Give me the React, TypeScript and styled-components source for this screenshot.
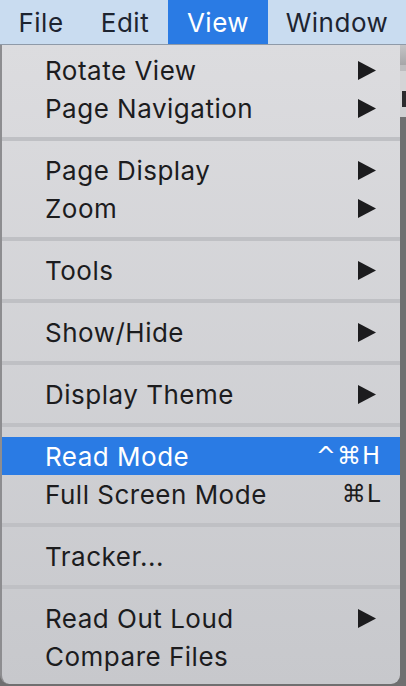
import React from "react";
import styled, { createGlobalStyle } from "styled-components";

const Global = createGlobalStyle`
  html, body { margin: 0; padding: 0; }
  body {
    width: 406px;
    height: 686px;
    overflow: hidden;
    background: #6f6f70;
    font-family: Inter, "Liberation Sans", "DejaVu Sans", sans-serif;
    -webkit-font-smoothing: antialiased;
  }
`;

const Screen = styled.div`
  width: 406px;
  height: 686px;
  display: flex;
  flex-direction: column;
`;

const MenuBar = styled.div`
  height: 44px;
  flex: none;
  display: flex;
  align-items: stretch;
  background: #c9dcf0;
  border-bottom: 1px solid #8f9aa8;
  box-sizing: content-box;
`;

const BarItem = styled.div<{ $active?: boolean; $w: number }>`
  width: ${(p) => p.$w}px;
  display: flex;
  align-items: center;
  justify-content: center;
  font-size: 26px;
  letter-spacing: 0.5px;
  color: ${(p) => (p.$active ? "#ffffff" : "#1d2430")};
  background: ${(p) => (p.$active ? "#2a7be4" : "transparent")};
`;

const Body = styled.div`
  flex: 1;
  display: flex;
  align-items: flex-start;
`;

const Menu = styled.div`
  width: 398px;
  flex: none;
  border-left: 2px solid #8d8d90;
  border-bottom-left-radius: 9px;
  border-bottom-right-radius: 9px;
  background: linear-gradient(#dcdcdf, #c7c8cc);
  padding: 6px 0 9px;
  display: flex;
  flex-direction: column;
`;

const Row = styled.div<{ $hl?: boolean }>`
  height: 38px;
  display: flex;
  align-items: center;
  padding: 0 24px 0 43px;
  font-size: 26px;
  letter-spacing: 0.5px;
  color: ${(p) => (p.$hl ? "#ffffff" : "#1c1c1e")};
  background: ${(p) => (p.$hl ? "#2a7be4" : "transparent")};
`;

const Label = styled.span`
  flex: 1;
`;

const Shortcut = styled.span`
  font-family: "DejaVu Sans", Inter, sans-serif;
  font-size: 24px;
  letter-spacing: 1px;
  margin-right: -5px;
`;

const Sep = styled.div`
  height: 24px;
  display: flex;
  align-items: center;
  &::after {
    content: "";
    flex: 1;
    height: 4px;
    background: #bfc0c4;
  }
`;

const Strip = styled.div`
  width: 6px;
  flex: none;
  display: flex;
  flex-direction: column;
`;

const StripBlock = styled.div<{ $h: number; $bg: string }>`
  height: ${(p) => p.$h}px;
  background: ${(p) => p.$bg};
  flex: none;
`;

const Arrow = () => (
  <svg width="18" height="19" viewBox="0 0 18 19">
    <path d="M0 0 L18 9.5 L0 19 Z" fill="#1c1c1e" />
  </svg>
);

type Item =
  | { sep: true }
  | { label: string; sub?: boolean; key?: string; hl?: boolean };

const items: Item[] = [
  { label: "Rotate View", sub: true },
  { label: "Page Navigation", sub: true },
  { sep: true },
  { label: "Page Display", sub: true },
  { label: "Zoom", sub: true },
  { sep: true },
  { label: "Tools", sub: true },
  { sep: true },
  { label: "Show/Hide", sub: true },
  { sep: true },
  { label: "Display Theme", sub: true },
  { sep: true },
  { label: "Read Mode", key: "^⌘H", hl: true },
  { label: "Full Screen Mode", key: "⌘L" },
  { sep: true },
  { label: "Tracker..." },
  { sep: true },
  { label: "Read Out Loud", sub: true },
  { label: "Compare Files" },
];

export default function App() {
  return (
    <>
      <Global />
      <Screen>
        <MenuBar>
          <BarItem $w={82}>File</BarItem>
          <BarItem $w={86}>Edit</BarItem>
          <BarItem $w={100} $active>
            View
          </BarItem>
          <BarItem $w={138}>Window</BarItem>
        </MenuBar>
        <Body>
          <Menu>
            {items.map((it, i) =>
              "sep" in it ? (
                <Sep key={i} />
              ) : (
                <Row key={i} $hl={it.hl}>
                  <Label>{it.label}</Label>
                  {it.sub && <Arrow />}
                  {it.key && <Shortcut>{it.key}</Shortcut>}
                </Row>
              )
            )}
          </Menu>
          <Strip>
            <StripBlock $h={20} $bg="linear-gradient(#c4c4c6, #a6a6a8)" />
            <StripBlock $h={6} $bg="#bdbdbf" />
            <StripBlock $h={20} $bg="#d4d4d6" />
            <StripBlock $h={16} $bg="linear-gradient(90deg, #d4d4d6 0 2px, #2c2c2e 2px)" />
            <StripBlock $h={10} $bg="#d0d0d2" />
            <StripBlock $h={580} $bg="#6f6f70" />
          </Strip>
        </Body>
      </Screen>
    </>
  );
}
